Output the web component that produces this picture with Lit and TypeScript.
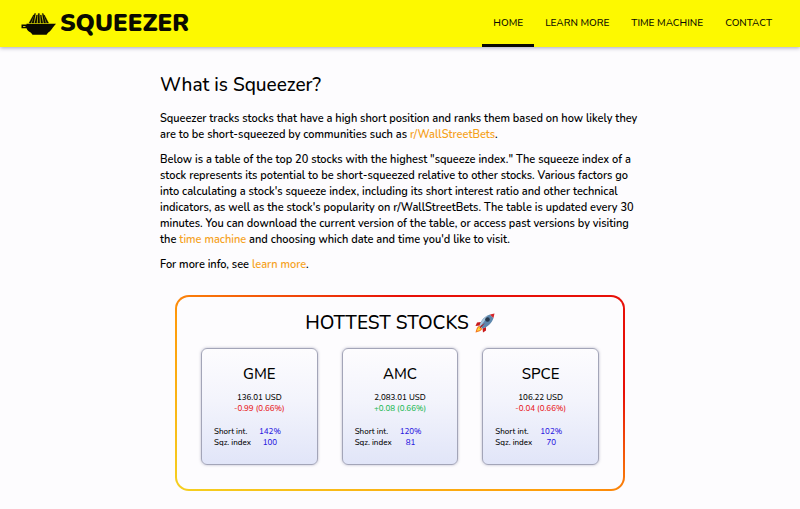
import { LitElement, html, css, svg } from "lit";
import { customElement, property } from "lit/decorators.js";

interface Stock {
  ticker: string;
  price: string;
  change: string;
  up: boolean;
  shortInterest: string;
  index: string;
}

const STOCKS: Stock[] = [
  { ticker: "GME", price: "136.01 USD", change: "-0.99 (0.66%)", up: false, shortInterest: "142%", index: "100" },
  { ticker: "AMC", price: "2,083.01 USD", change: "+0.08 (0.66%)", up: true, shortInterest: "120%", index: "81" },
  { ticker: "SPCE", price: "106.22 USD", change: "-0.04 (0.66%)", up: false, shortInterest: "102%", index: "70" },
];

const NAV = ["HOME", "LEARN MORE", "TIME MACHINE", "CONTACT"];

@customElement("stock-card")
export class StockCard extends LitElement {
  @property({ attribute: false }) stock!: Stock;

  static styles = css`
    :host {
      display: block;
      box-sizing: border-box;
      padding: 14px 12px 16px;
      border: 1px solid #a3a5b8;
      border-radius: 6px;
      background: linear-gradient(#fdfcfe, #f3f4fc 45%, #e1e5f8);
      box-shadow: 0 0 3px rgba(80, 80, 120, 0.4);
      font-size: 8px;
      font-weight: 500;
      line-height: 11px;
    }
    .ticker {
      margin: 0 0 7px;
      font-size: 15px;
      line-height: 22px;
      font-weight: 500;
      text-align: center;
    }
    .quote {
      margin: 0 0 12px;
      text-align: center;
    }
    .change {
      display: block;
      color: #e8201c;
    }
    .up {
      color: #1db954;
    }
    .figures {
      border-collapse: collapse;
    }
    .label {
      padding: 0 8px 0 0;
      font-weight: 500;
      text-align: left;
      white-space: nowrap;
    }
    .value {
      padding: 0;
      color: #2a17e0;
      text-align: center;
    }
  `;

  render() {
    const s = this.stock;
    return html`
      <h3 class="ticker">${s.ticker}</h3>
      <p class="quote">
        ${s.price}
        <span class="change ${s.up ? "up" : ""}">${s.change}</span>
      </p>
      <table class="figures">
        <tr><th class="label" scope="row">Short int.</th><td class="value">${s.shortInterest}</td></tr>
        <tr><th class="label" scope="row">Sqz. index</th><td class="value">${s.index}</td></tr>
      </table>
    `;
  }
}

const ribs = [
  "M8 11 L10 11 L13.200 3 L12.400 3 Z",
  "M10.800 11 L12.800 11 L14.600 1.500 L13.600 1.500 Z",
  "M13.700 11 L15.700 11 L16.500 3 L15.500 3 Z",
  "M16.800 11 L18.800 11 L18.400 1.500 L17.200 1.500 Z",
  "M19.900 11 L21.900 11 L20.300 3 L19.300 3 Z",
  "M22.800 11 L24.800 11 L22.200 1.500 L21.200 1.500 Z",
  "M25.600 11 L27.600 11 L23.400 3 L22.600 3 Z",
];

const juicer = html`
  <svg class="juicer" viewBox="0 0 36 24" width="36" height="24" aria-hidden="true">
    <g fill="#0a0a00" stroke="#0a0a00" stroke-width="0.300">
      ${ribs.map((d) => svg`<path d=${d}></path>`)}
    </g>
    <path d="M5.500 11.800 H35 L33.500 13.500 C31.500 15.500 30 19 27 20.800 L25.500 22.800 H11.500 L10 20.800 C7.500 19.500 6 18 5.500 16.200 H0.500 V12.500 H5.500 Z" fill="#0a0a00"></path>
    <path d="M2 14 H4.500 V14.800 H2 Z" fill="#fdf900"></path>
  </svg>
`;

const rocket = html`
  <svg class="rocket" viewBox="0 0 20 20" width="20" height="20" role="img" aria-label="rocket">
    <path d="M6 9 L2 9.500 L0.500 13 L5 12.500 Z" fill="#c9181b"></path>
    <path d="M11 14 L11 17.500 L8 19.500 L7.500 15.500 Z" fill="#c9181b"></path>
    <path d="M4.500 13 C2 13 1.500 16 0.500 19.500 C4 18.500 7 18 7 15.500 Z" fill="#f5781e"></path>
    <path d="M4.500 14 C3 14.500 2.500 16 2 18 C4 17.500 5.500 17 6 15.500 Z" fill="#ffdf3a"></path>
    <path d="M4.500 12.500 C6 7 10 3 15 1.500 C17 4 18 4.500 18.500 5 C17 10 13 14 7.500 15.500 Z" fill="#5d87ad"></path>
    <path d="M4.500 12.500 C6 8 9 4.500 13 2.300 C11 6 8 10 5.500 13.500 Z" fill="#a9c6dc"></path>
    <path d="M15 1.500 L19.500 0.500 L18.500 5 C17.500 4 16 3 15 1.500 Z" fill="#d5262a"></path>
    <circle cx="12.500" cy="6.500" r="2.300" fill="#28394d"></circle>
    <path d="M10 10 L6.500 14 L4.500 16 L5.500 13 Z" fill="#b3161a"></path>
  </svg>
`;

@customElement("app-root")
export class AppRoot extends LitElement {
  static styles = css`
    :host {
      display: block;
      min-height: 100vh;
      background: #fdfcfe;
      color: #000;
      font-family: Nunito, Lato, sans-serif;
      font-size: 11px;
      font-weight: 600;
      line-height: 16px;
    }
    .bar {
      display: flex;
      justify-content: space-between;
      padding: 0 17px 0 21px;
      background: #fdf900;
      box-shadow: 0 1px 4px rgba(40, 40, 80, 0.4);
    }
    .brand {
      display: flex;
      align-items: center;
      gap: 3px;
      color: #0a0a00;
      font-size: 24px;
      font-weight: 900;
      line-height: 47px;
      text-decoration: none;
    }
    .nav {
      display: flex;
    }
    .tab {
      padding: 3px 11px 0;
      border-bottom: 3px solid transparent;
      color: #0a0a00;
      font-size: 10px;
      font-weight: 500;
      line-height: 41px;
      text-decoration: none;
    }
    .current {
      border-color: #0a0a00;
    }
    .page {
      width: 60%;
      margin: 0 auto;
      padding: 26px 0 18px;
    }
    .title {
      margin: 0 0 14px;
      font-size: 19px;
      line-height: 24px;
      font-weight: 500;
    }
    .text {
      margin: 0 0 9px;
    }
    .link {
      color: #f5a11c;
      text-decoration: none;
    }
    .hot {
      margin: 22px 15px 0;
      padding: 14px 24px 24px;
      border: 2px solid transparent;
      border-radius: 14px;
      background:
        linear-gradient(#fdfcfe, #fdfcfe) padding-box,
        linear-gradient(to top right, #f5d020, #ff9a0a 45%, #e81008 75%) border-box;
    }
    .heading {
      display: flex;
      align-items: center;
      justify-content: center;
      gap: 6px;
      margin: 0 0 13px;
      font-size: 19px;
      line-height: 24px;
      font-weight: 500;
    }
    .cards {
      display: grid;
      grid-template-columns: repeat(3, 1fr);
      gap: 24px;
    }
  `;

  render() {
    return html`
      <header class="bar">
        <a class="brand" href="#">${juicer}SQUEEZER</a>
        <nav class="nav">
          ${NAV.map((n, i) => html`<a class="tab ${i === 0 ? "current" : ""}" href="#">${n}</a>`)}
        </nav>
      </header>
      <main class="page">
        <h1 class="title">What is Squeezer?</h1>
        <p class="text">
          Squeezer tracks stocks that have a high short position and ranks them based on how likely they
          are to be short-squeezed by communities such as <a class="link" href="#">r/WallStreetBets</a>.
        </p>
        <p class="text">
          Below is a table of the top 20 stocks with the highest "squeeze index." The squeeze index of a
          stock represents its potential to be short-squeezed relative to other stocks. Various factors go
          into calculating a stock's squeeze index, including its short interest ratio and other technical
          indicators, as well as the stock's popularity on r/WallStreetBets. The table is updated every 30
          minutes. You can download the current version of the table, or access past versions by visiting
          the <a class="link" href="#">time machine</a> and choosing which date and time you'd like to visit.
        </p>
        <p class="text">For more info, see <a class="link" href="#">learn more</a>.</p>
        <section class="hot">
          <h2 class="heading">HOTTEST STOCKS ${rocket}</h2>
          <div class="cards">
            ${STOCKS.map((s) => html`<stock-card .stock=${s}></stock-card>`)}
          </div>
        </section>
      </main>
    `;
  }
}
